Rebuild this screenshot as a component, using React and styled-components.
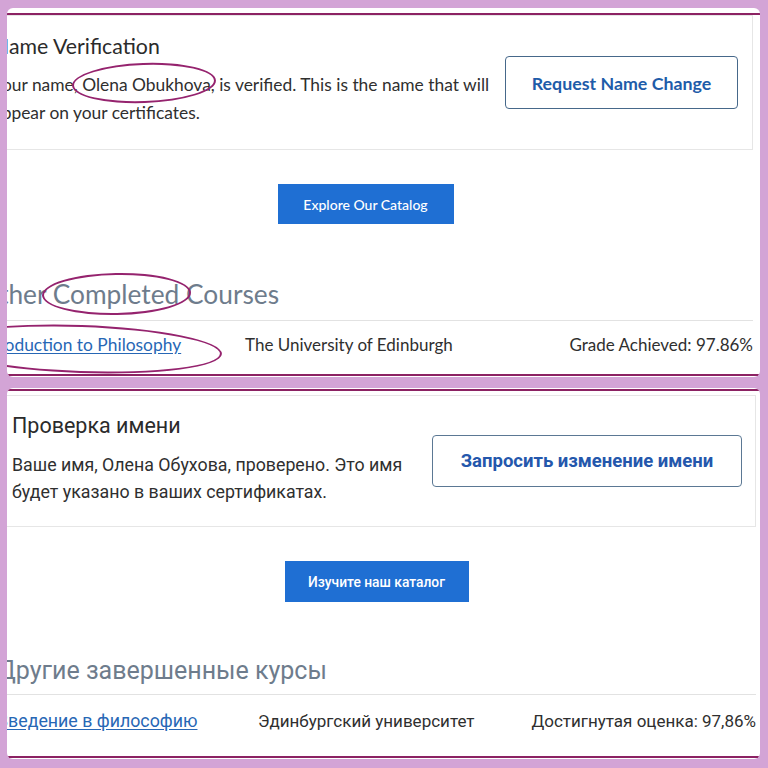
import React from 'react';
import styled, { createGlobalStyle } from 'styled-components';

const GlobalStyle = createGlobalStyle`
  html, body { margin: 0; padding: 0; background: #d3a4d6; }
  body { width: 768px; height: 768px; overflow: hidden; }
  * { box-sizing: border-box; }
`;

const Page = styled.div`
  display: flex;
  flex-direction: column;
  gap: 11px;
  padding: 8px 8px 0 7px;
`;

const Panel = styled.section`
  background: #fff;
  border-radius: 6px;
  overflow: hidden;
  padding: ${p => p.$pad};
  font-family: ${p => p.$font};
`;

const Frame = styled.div`
  border-top: 2px solid #8c2263;
  border-bottom: 2px solid #8c2263;
`;

const Content = styled.div`
  height: ${p => p.$h}px;
  margin: 0 ${p => p.$right}px 0 ${p => p.$left}px;
  display: flex;
  flex-direction: column;
`;

const Card = styled.div`
  display: flex;
  align-items: center;
  justify-content: space-between;
  height: ${p => p.$h}px;
  margin-top: ${p => p.$mt}px;
  padding: 0 ${p => p.$pr}px 0 14px;
  border: 1px solid #e6e6e6;
  background: #fff;
`;

const TextBlock = styled.div`
  padding-bottom: ${p => p.$pb}px;
`;

const CardTitle = styled.h2`
  margin: 0;
  font-weight: 400;
  font-size: ${p => p.$fs}px;
  line-height: 28px;
  color: #2b2b2b;
  white-space: nowrap;
`;

const CardText = styled.p`
  margin: 11px 0 0;
  font-size: ${p => p.$fs}px;
  line-height: ${p => p.$lh}px;
  color: #2f2f2f;
  width: ${p => p.$w}px;
`;

const Circled = styled.span`
  position: relative;
  display: inline-block;
  &::after {
    content: '';
    position: absolute;
    top: ${p => p.$t}px;
    bottom: ${p => p.$b}px;
    left: ${p => p.$l}px;
    right: ${p => p.$r}px;
    border: 2px solid #95236e;
    border-radius: 50%;
    transform: rotate(${p => p.$rot || 0}deg);
    pointer-events: none;
  }
`;

const OutlineButton = styled.button`
  flex: none;
  width: ${p => p.$w}px;
  height: ${p => p.$h}px;
  border: 1px solid ${p => p.$border};
  border-radius: 4px;
  background: #fff;
  color: ${p => p.$color};
  font-family: inherit;
  font-weight: 700;
  font-size: ${p => p.$fs}px;
  padding: 0;
  white-space: nowrap;
`;

const PrimaryButton = styled.button`
  align-self: center;
  width: ${p => p.$w}px;
  height: ${p => p.$h}px;
  margin-top: 34px;
  border: none;
  border-radius: 0;
  background: #1f6fd3;
  color: #fff;
  font-family: inherit;
  font-size: ${p => p.$fs}px;
  font-weight: ${p => p.$fw};
  padding: 0;
`;

const SectionTitle = styled.h3`
  margin: ${p => p.$mt}px 0 0;
  font-weight: 400;
  font-size: ${p => p.$fs}px;
  line-height: 30px;
  color: #6e7c8c;
  white-space: nowrap;
`;

const CourseRow = styled.div`
  display: grid;
  grid-template-columns: ${p => p.$col}px 1fr auto;
  align-items: center;
  margin-top: ${p => p.$mt}px;
  padding-top: ${p => p.$pt}px;
  border-top: 1px solid #e2e2e2;
  font-size: 17px;
  line-height: 28px;
  color: #2f2f2f;
  white-space: nowrap;
`;

const CourseLink = styled.a`
  color: #2767b5;
  font-size: ${p => p.$fs}px;
  text-decoration: underline;
  text-underline-offset: 2px;
`;

const Grade = styled.span`
  text-align: right;
`;

const en = {
  title: 'Name Verification',
  pre: 'Your name, ',
  name: 'Olena Obukhova',
  post: ', is verified. This is the name that will appear on your certificates.',
  request: 'Request Name Change',
  catalog: 'Explore Our Catalog',
  sectionPre: 'Other ',
  sectionMid: 'Completed',
  sectionPost: ' Courses',
  course: 'Introduction to Philosophy',
  uni: 'The University of Edinburgh',
  grade: 'Grade Achieved: 97.86%',
};

const ru = {
  title: 'Проверка имени',
  text: 'Ваше имя, Олена Обухова, проверено. Это имя будет указано в ваших сертификатах.',
  request: 'Запросить изменение имени',
  catalog: 'Изучите наш каталог',
  section: 'Другие завершенные курсы',
  course: 'Введение в философию',
  uni: 'Эдинбургский университет',
  grade: 'Достигнутая оценка: 97,86%',
};

export default function App() {
  return (
    <>
      <GlobalStyle />
      <Page>
        <Panel $pad="5px 0 1px" $font='"Lato", "Noto Sans", sans-serif'>
          <Frame>
            <Content $h={359} $left={-29} $right={7}>
              <Card $h={135} $mt={0} $pr={14}>
                <TextBlock $pb={6}>
                  <CardTitle $fs={21.3}>{en.title}</CardTitle>
                  <CardText $fs={17.4} $lh={28} $w={505}>
                    {en.pre}
                    <Circled $t={-8} $b={-4} $l={-10} $r={-5} $rot={-2}>{en.name}</Circled>
                    {en.post}
                  </CardText>
                </TextBlock>
                <OutlineButton $w={233} $h={53} $fs={17.8} $border="#46688a" $color="#1e5ca9">
                  {en.request}
                </OutlineButton>
              </Card>
              <PrimaryButton $w={176} $h={40} $fs={14} $fw={500}>{en.catalog}</PrimaryButton>
              <SectionTitle $mt={55} $fs={26.3}>
                {en.sectionPre}
                <Circled $t={-6} $b={-6} $l={-11} $r={-11} $rot={-1}>{en.sectionMid}</Circled>
                {en.sectionPost}
              </SectionTitle>
              <CourseRow $col={267} $mt={11} $pt={10}>
                <span>
                  <Circled $t={-6} $b={-14} $l={-38} $r={-41} $rot={2}>
                    <CourseLink href="#" $fs={17.4}>{en.course}</CourseLink>
                  </Circled>
                </span>
                <span>{en.uni}</span>
                <Grade>{en.grade}</Grade>
              </CourseRow>
            </Content>
          </Frame>
        </Panel>

        <Panel $pad="1px 0 1px" $font='"Roboto", "Liberation Sans", sans-serif'>
          <Frame>
            <Content $h={365} $left={-10} $right={4}>
              <Card $h={132} $mt={4} $pr={13}>
                <TextBlock $pb={5}>
                  <CardTitle $fs={21.5}>{ru.title}</CardTitle>
                  <CardText $fs={17.8} $lh={27} $w={400}>{ru.text}</CardText>
                </TextBlock>
                <OutlineButton $w={310} $h={52} $fs={18.5} $border="#5b7894" $color="#2457ac">
                  {ru.request}
                </OutlineButton>
              </Card>
              <PrimaryButton $w={184} $h={41} $fs={13.8} $fw={500}>{ru.catalog}</PrimaryButton>
              <SectionTitle $mt={54} $fs={25}>{ru.section}</SectionTitle>
              <CourseRow $col={261} $mt={8} $pt={12}>
                <span>
                  <CourseLink href="#" $fs={17.8}>{ru.course}</CourseLink>
                </span>
                <span>{ru.uni}</span>
                <Grade>{ru.grade}</Grade>
              </CourseRow>
            </Content>
          </Frame>
        </Panel>
      </Page>
    </>
  );
}
